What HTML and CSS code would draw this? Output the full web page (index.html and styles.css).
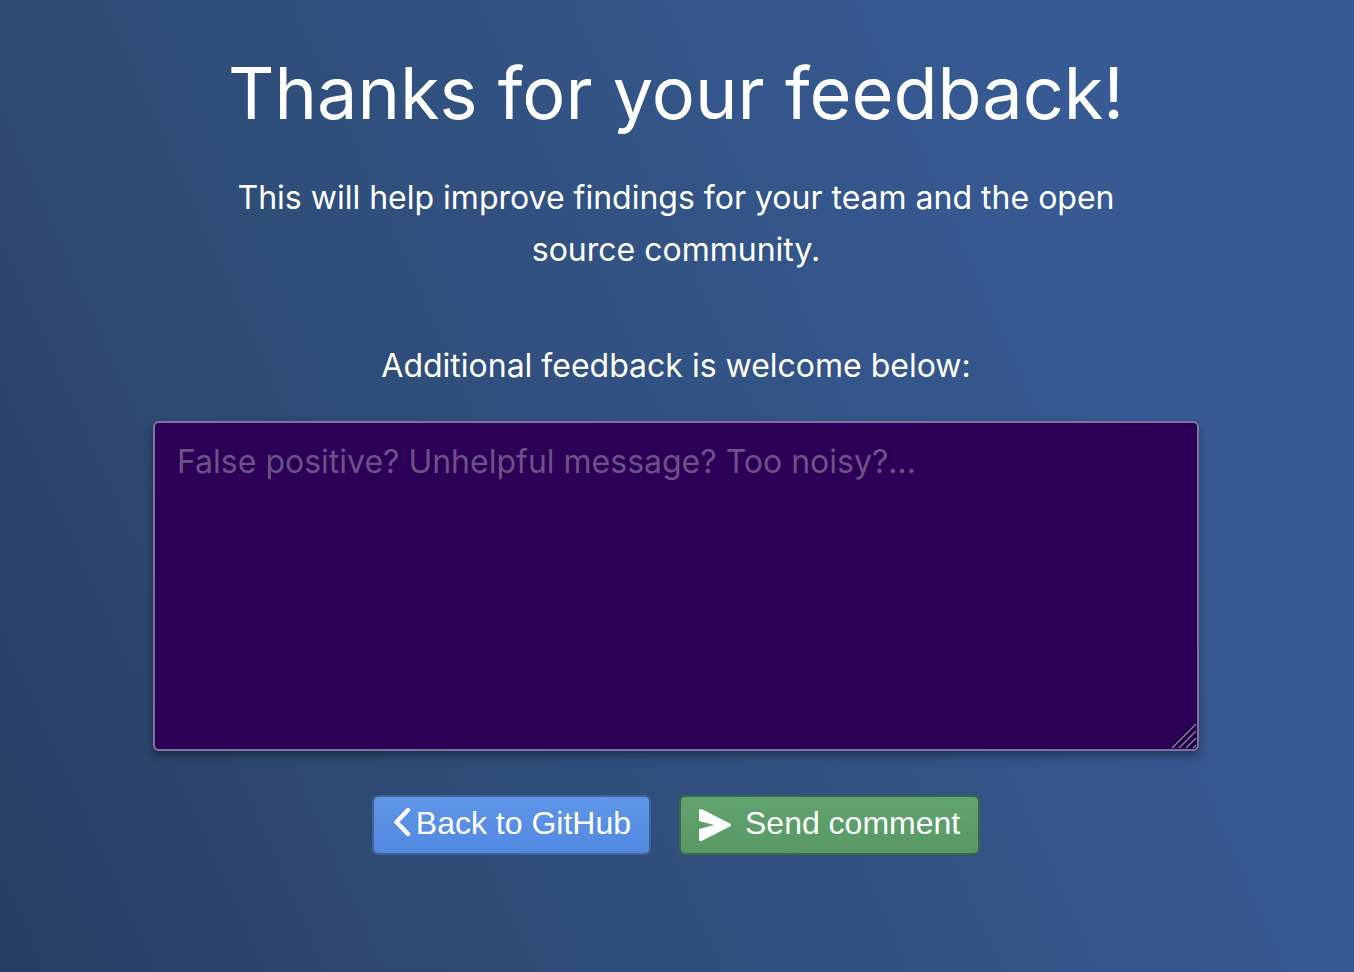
FILE: index.html
```
<!DOCTYPE html>
<html lang="en">
<head>
<meta charset="utf-8">
<meta name="viewport" content="width=device-width, initial-scale=1">
<title>Thanks for your feedback!</title>
<link rel="stylesheet" href="styles.css">
</head>
<body>
<main class="page">
  <h1 class="title">Thanks for your feedback!</h1>
  <p class="lead">This will help improve findings for your team and the open source community.</p>
  <form class="feedback">
    <label class="prompt" for="comment">Additional feedback is welcome below:</label>
    <div class="comment-box">
      <textarea class="comment" id="comment" placeholder="False positive? Unhelpful message? Too noisy?..."></textarea>
      <svg class="grip" viewBox="0 0 26 26" aria-hidden="true">
        <path d="M-1 25 L25 -1 M6 25 L25 6 M13 25 L25 13 M20 25 L25 20" stroke="#140626" stroke-width="2"/>
        <path d="M1 25 L25 1 M8 25 L25 8 M15 25 L25 15 M22 25 L25 22" stroke="#8876a0" stroke-width="1.5"/>
      </svg>
    </div>
    <div class="actions">
      <button class="button button-back" type="button">
        <svg class="icon-back" viewBox="0 0 24 32" aria-hidden="true"><path d="M16 3 L4.5 15 L16 27" fill="none" stroke="currentColor" stroke-width="4.4" stroke-linecap="round" stroke-linejoin="round"/></svg>
        <span class="button-text">Back to GitHub</span>
      </button>
      <button class="button button-send" type="submit">
        <svg class="icon-send" viewBox="0 0 32 32" aria-hidden="true"><path d="M0 1.5 Q0 0 1.5 0 Q2.5 0 3.5 .6 L31 14.6 Q33 16 31 17.4 L3.5 31.4 Q2.5 32 1.5 32 Q0 32 0 30.5 V20 L15 16 L0 12 Z" fill="currentColor"/></svg>
        <span class="button-text">Send comment</span>
      </button>
    </div>
  </form>
</main>
</body>
</html>
```
FILE: styles.css
```
* { box-sizing: border-box; }
body {
  margin: 0;
  min-height: 100vh;
  padding-right: 2px;
  background: linear-gradient(66deg, #273d63 0%, #2d4a73 24%, #375a94 80%, #375a94 100%);
  color: #fff;
  font-family: Inter, "Liberation Sans", sans-serif;
  font-weight: 390;
}
.page {
  max-width: 1046px;
  margin: 0 auto;
  padding: 47px 0;
  text-align: center;
}
.title { margin: 0; font-size: 72px; line-height: 92px; font-weight: 390; }
.lead { margin: 33px 80px 0; font-size: 32px; line-height: 52px; }
.feedback { margin: 64px 0 0; }
.prompt { display: block; font-size: 32px; line-height: 52px; }
.comment-box { position: relative; margin-top: 29px; }
.comment {
  display: block;
  width: 100%;
  height: 330px;
  padding: 15px 22px;
  border: 2px solid #82729f;
  border-radius: 6px;
  background: #2c0056;
  box-shadow: 0 5px 10px rgba(0, 0, 0, 0.35);
  color: #fff;
  font-family: inherit;
  font-size: 32px;
  font-weight: inherit;
  line-height: 48px;
  resize: vertical;
}
.comment::placeholder { color: #6b5288; opacity: 1; }
.comment::-webkit-resizer { background: transparent; }
.grip {
  position: absolute;
  right: 2px;
  bottom: 2px;
  width: 26px;
  height: 26px;
  pointer-events: none;
}
.actions { display: flex; justify-content: center; gap: 28px; margin-top: 44px; }
.button {
  display: flex;
  align-items: center;
  height: 60px;
  padding: 0 18px;
  border: 2px solid;
  border-radius: 6px;
  color: #fff;
  font-family: "Liberation Sans", Arial, sans-serif;
  font-size: 32px;
}
.button-text { padding-bottom: 4px; }
.button-back { border-color: #406299; background: linear-gradient(#5f96e8, #5288e0) padding-box; }
.button-send { gap: 14px; border-color: #3a6650; background: linear-gradient(#62a372, #599862) padding-box; }
.icon-back { width: 24px; height: 32px; margin-bottom: 4px; }
.icon-send { width: 32px; height: 32px; }
```
